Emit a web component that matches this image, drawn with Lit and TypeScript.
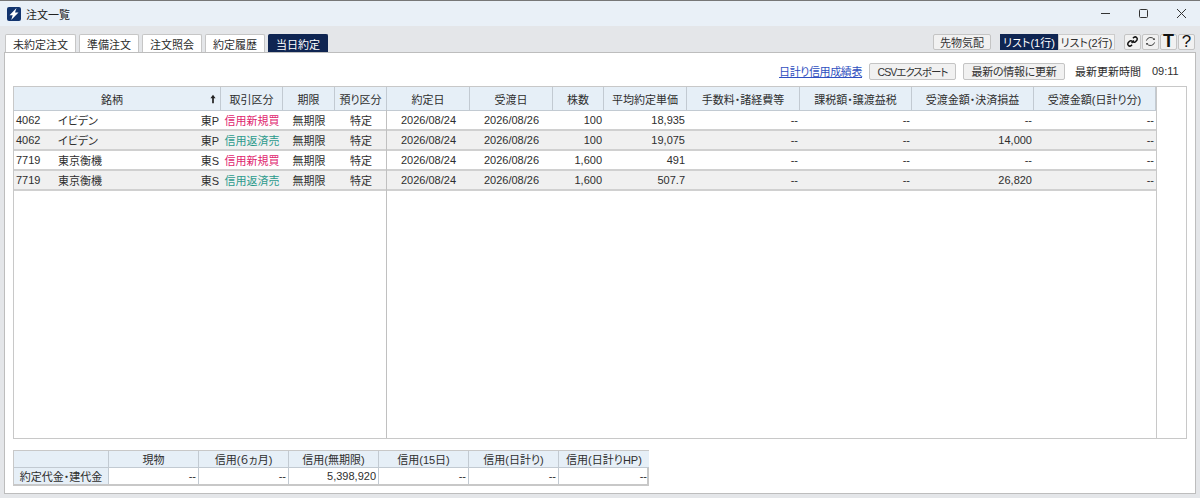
import { LitElement, html, css } from "lit";
import { customElement } from "lit/decorators.js";

const rows = [
  { code: "4062", name: "イビデン", mkt: "東P", kind: "信用新規買", buy: true, qty: "100", price: "18,935", pl: "--" },
  { code: "4062", name: "イビデン", mkt: "東P", kind: "信用返済売", buy: false, qty: "100", price: "19,075", pl: "14,000" },
  { code: "7719", name: "東京衡機", mkt: "東S", kind: "信用新規買", buy: true, qty: "1,600", price: "491", pl: "--" },
  { code: "7719", name: "東京衡機", mkt: "東S", kind: "信用返済売", buy: false, qty: "1,600", price: "507.7", pl: "26,820" },
];
const leftHead = ["取引区分", "期限", "預り区分"];
const rightHead = ["約定日", "受渡日", "株数", "平均約定単価", "手数料・諸経費等", "課税額・譲渡益税", "受渡金額・決済損益", "受渡金額(日計り分)"];
const tabs = ["未約定注文", "準備注文", "注文照会", "約定履歴", "当日約定"];
const sumHead = ["現物", "信用(６ヵ月)", "信用(無期限)", "信用(15日)", "信用(日計り)", "信用(日計りHP)"];
const sumVals = ["--", "--", "5,398,920", "--", "--", "--"];

@customElement("app-root")
export class AppRoot extends LitElement {
  static styles = css`
    :host { display: block; width: 1200px; height: 498px; overflow: hidden; font: 11px "Liberation Sans", "Noto Sans CJK JP", sans-serif; font-feature-settings: "palt"; color: #2e2e2e; }
    * { box-sizing: border-box; }
    .win { height: 498px; display: flex; flex-direction: column; background: #e4e6e9; }
    .title { height: 26px; flex: none; display: flex; align-items: center; background: #e9f0f7; border-top: 1px solid #777; padding-left: 7px; gap: 5px; color: #222; font-size: 11px; }
    .logo { width: 14px; height: 14px; display: block; }
    .title .name { flex: 1; }
    .ctl { width: 38px; height: 25px; display: flex; align-items: center; justify-content: center; }
    .ctl svg { width: 11px; height: 11px; display: block; }
    .ctls { display: flex; }
    .bar { height: 26px; flex: none; display: flex; align-items: flex-end; padding: 0 4px 0 5px; }
    .tabs { display: flex; gap: 3px; flex: 1; }
    .tab { width: 60px; height: 18px; display: flex; align-items: center; justify-content: center; background: #fff; border: 1px solid #c6c6c6; border-bottom: none; border-radius: 2px 2px 0 0; font-size: 11px; }
    .tab.wide { width: 71px; }
    .tab.on { background: #0f2552; border-color: #0f2552; color: #fff; }
    .tools { display: flex; align-items: center; height: 18px; padding-bottom: 3px; }
    .btn { height: 16px; display: flex; align-items: center; justify-content: center; background: #f1f1f1; border: 1px solid #c4c4c4; border-radius: 2px; color: #333; white-space: nowrap; }
    .sakimono { width: 58px; margin-right: 9px; }
    .seg { display: flex; width: 115px; height: 16px; margin-right: 9px; }
    .seg div { width: 57px; display: flex; align-items: center; justify-content: center; background: #f3f3f3; border: 1px solid #ccc; white-space: nowrap; padding: 0; }
    .seg .on { width: 58px; background: #0f2552; border-color: #0f2552; color: #fff; }
    .ico { width: 17px; margin-right: 1px; padding: 0; color: #111; }
    .ico svg { width: 13px; height: 13px; display: block; }
    .tee { font-size: 18px; font-weight: 700; }
    .qm { font-size: 17px; font-weight: 400; }
    .panel { flex: 1; margin: 0 4px 4px 4px; background: #fff; border: 1px solid #bdbdbd; padding: 9px 8px 7px 8px; display: flex; flex-direction: column; }
    .actions { height: 24px; flex: none; display: flex; align-items: center; justify-content: flex-end; padding: 0 9px 6px 0; }
    .link { color: #2f4fc0; text-decoration: underline; margin-right: 7px; letter-spacing: -0.4px; }
    .act { height: 17px; padding: 0; margin-right: 7px; }
    .csv { width: 87px; font-size: 10.5px; letter-spacing: -1px; }
    .upd { width: 102px; margin-right: 10px; letter-spacing: -0.3px; }
    .stamp { width: 77px; }
    .time { width: 26px; }
    .grid { flex: 1; display: flex; border: 1px solid #c8c8c8; min-height: 0; }
    .pane { display: flex; flex-direction: column; }
    .pane.l { width: 373px; border-right: 1px solid #c0c0c0; }
    .pane.r { width: 770px; border-right: 1px solid #c8c8c8; }
    .row { display: grid; height: 20px; align-items: stretch; border-bottom: 2px solid #d0d0d0; }
    .row.alt { background: #f0f0f0; }
    .row.head { height: 24px; background: #e6eff7; border-bottom: 1px solid #c2cad2; }
    .l .row { grid-template-columns: 207px 62px 52px 52px; }
    .r .row { grid-template-columns: 83px 83px 51px 83px 113px 112px 122px 122px; }
    .c { display: flex; align-items: center; justify-content: center; white-space: nowrap; overflow: hidden; padding: 0 2px; }
    .head .c { border-right: 1px solid #c2cad2; position: relative; }
    .head .sym { padding-right: 12px; }
    .num { justify-content: flex-end; }
    .stock { justify-content: flex-start; }
    .stock .cd { width: 42px; }
    .stock .nm { flex: 1; }
    .arrow { position: absolute; right: 4px; top: 7px; width: 6px; height: 10px; }
    .buy { color: #e0246e; }
    .sell { color: #2b9a8c; }
    .sum { flex: none; margin-top: 11px; width: 636px; display: grid; grid-template-columns: 95px repeat(6, 90px); border: 1px solid #c8c8c8; border-right-width: 2px; border-bottom-width: 2px; }
    .sum div { height: 17px; display: flex; align-items: center; justify-content: center; padding: 0 2px; border-right: 1px solid #c2cad2; white-space: nowrap; }
    .sum div:nth-child(7n) { border-right: none; }
    .sum .h { background: #e6eff7; border-bottom: 1px solid #c2cad2; }
    .sum .v { justify-content: flex-end; height: 16px; }
    .sum .lb { height: 16px; border-bottom: none; }
  `;

  render() {
    return html`<div class="win">
      <div class="title">
        <svg class="logo" viewBox="0 0 14 14"><rect width="14" height="14" rx="2" fill="#12346e"/><path d="M9.5 1 2.5 8.2h3.2L4.2 13l7.3-7.4H8z" fill="#fff"/></svg>
        <span class="name">注文一覧</span>
        <div class="ctls">
          <div class="ctl"><svg viewBox="0 0 11 11"><path d="M1 5.5h9" stroke="#333"/></svg></div>
          <div class="ctl"><svg viewBox="0 0 11 11"><rect x="1.5" y="1.5" width="8" height="8" rx="1" fill="none" stroke="#333"/></svg></div>
          <div class="ctl"><svg viewBox="0 0 11 11"><path d="M1 1l9 9M10 1l-9 9" stroke="#333"/></svg></div>
        </div>
      </div>
      <div class="bar">
        <div class="tabs">
          ${tabs.map((t, i) => html`<div class="tab ${i === 0 ? "wide" : ""} ${i === 4 ? "on" : ""}">${t}</div>`)}
        </div>
        <div class="tools">
          <div class="btn sakimono">先物気配</div>
          <div class="seg"><div class="on">リスト(1行)</div><div>リスト(2行)</div></div>
          <div class="btn ico"><svg viewBox="0 0 14 14" fill="none" stroke="#111" stroke-width="1.6"><path d="M6 8.5 8.5 6M7.5 3.5l1-1a2.3 2.3 0 0 1 3.2 3.2l-1.5 1.5a2.3 2.3 0 0 1-3 .1M6.5 10.5l-1 1a2.3 2.3 0 0 1-3.2-3.2l1.5-1.5a2.3 2.3 0 0 1 3-.1"/></svg></div>
          <div class="btn ico"><svg viewBox="0 0 14 14" fill="none" stroke="#333"><path d="M2.6 6a4.6 4.6 0 0 1 8.2-1.4M11.4 8a4.6 4.6 0 0 1-8.2 1.4"/><path d="M11.8 5.4 9.4 5.2l1.9-1.9zM2.2 8.6l2.4.2-1.9 1.9z" fill="#333" stroke="none"/></svg></div>
          <div class="btn ico tee">T</div>
          <div class="btn ico qm">?</div>
        </div>
      </div>
      <div class="panel">
        <div class="actions">
          <span class="link">日計り信用成績表</span>
          <div class="btn act csv">CSVエクスポート</div>
          <div class="btn act upd">最新の情報に更新</div>
          <span class="stamp">最新更新時間</span>
          <span class="time">09:11</span>
        </div>
        <div class="grid">
          <div class="pane l">
            <div class="row head">
              <div class="c sym">銘柄<svg class="arrow" viewBox="0 0 7 10"><path d="M3.5 0 6.5 4H4.5v6h-2V4H.5z" fill="#222"/></svg></div>
              ${leftHead.map((h) => html`<div class="c">${h}</div>`)}
            </div>
            ${rows.map((r, i) => html`<div class="row ${i % 2 ? "alt" : ""}">
              <div class="c stock"><span class="cd">${r.code}</span><span class="nm">${r.name}</span><span>${r.mkt}</span></div>
              <div class="c ${r.buy ? "buy" : "sell"}">${r.kind}</div>
              <div class="c">無期限</div>
              <div class="c">特定</div>
            </div>`)}
          </div>
          <div class="pane r">
            <div class="row head">${rightHead.map((h) => html`<div class="c">${h}</div>`)}</div>
            ${rows.map((r, i) => html`<div class="row ${i % 2 ? "alt" : ""}">
              <div class="c">2026/08/24</div>
              <div class="c">2026/08/26</div>
              <div class="c num">${r.qty}</div>
              <div class="c num">${r.price}</div>
              <div class="c num">--</div>
              <div class="c num">--</div>
              <div class="c num">${r.pl}</div>
              <div class="c num">--</div>
            </div>`)}
          </div>
        </div>
        <div class="sum">
          <div class="h"></div>
          ${sumHead.map((h) => html`<div class="h">${h}</div>`)}
          <div class="h lb">約定代金・建代金</div>
          ${sumVals.map((v) => html`<div class="v">${v}</div>`)}
        </div>
      </div>
    </div>`;
  }
}
